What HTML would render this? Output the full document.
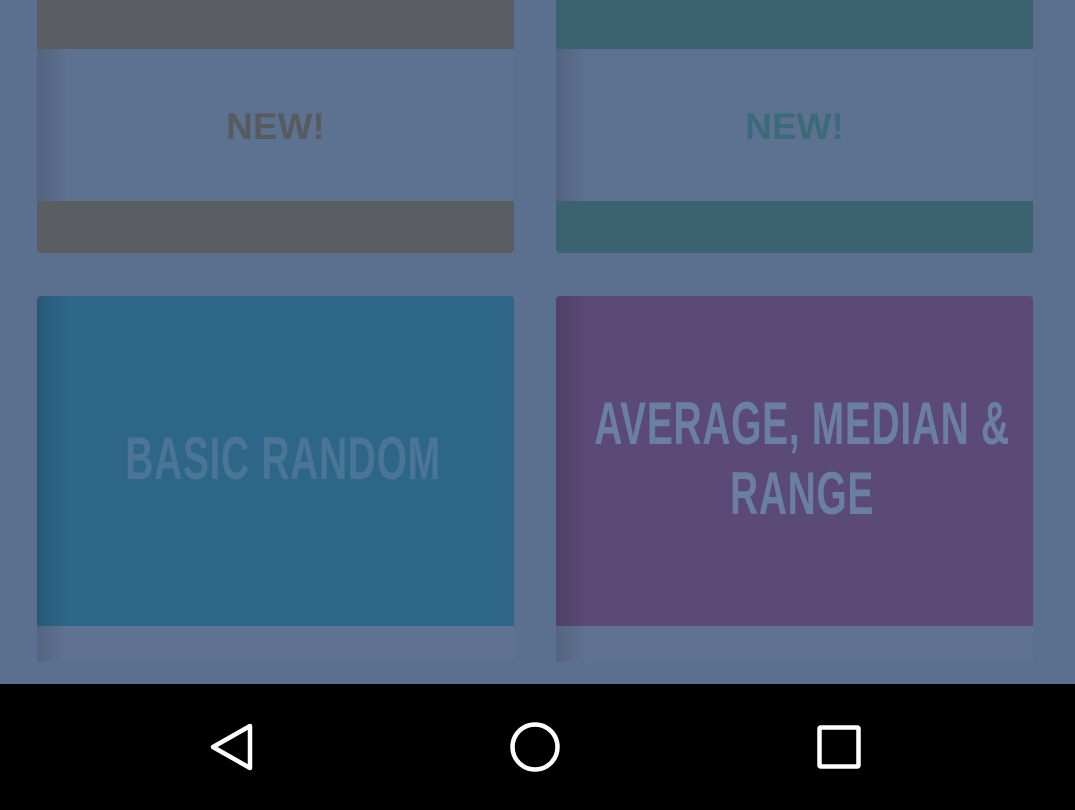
<!DOCTYPE html>
<html><head><style>
body{margin:0;width:1075px;height:810px;background:#5b6f8e;position:relative;overflow:hidden;font-family:"Liberation Sans",sans-serif}
.c{position:absolute;}
.shade{background-image:linear-gradient(90deg,rgba(0,0,0,0.12),rgba(0,0,0,0) 30px)}
.t{position:absolute;text-align:center}
.ob{position:absolute;font-weight:bold;font-size:60px;line-height:60px;white-space:nowrap;transform:translateX(-50%) scale(0.65,1);letter-spacing:1px}
</style></head><body>
<div class="c" style="left:37px;top:0;width:477px;height:49px;background:#5a5e62"></div>
<div class="c shade" style="left:37px;top:49px;width:477px;height:152px;background-color:#5d7190"></div>
<div class="c" style="left:37px;top:201px;width:477px;height:52px;background:#5a5e62;border-radius:0 0 4px 4px"></div>
<div class="t" style="left:37px;width:477px;top:106px;font-size:37px;font-weight:bold;color:#565b60">NEW!</div>
<div class="c" style="left:556px;top:0;width:477px;height:49px;background:#3a6271"></div>
<div class="c shade" style="left:556px;top:49px;width:477px;height:152px;background-color:#5d7190"></div>
<div class="c" style="left:556px;top:201px;width:477px;height:52px;background:#3a6271;border-radius:0 0 4px 4px"></div>
<div class="t" style="left:556px;width:477px;top:106px;font-size:37px;font-weight:bold;color:#3b6b78">NEW!</div>
<div class="c shade" style="left:37px;top:296px;width:477px;height:330px;background-color:#2d6688;border-radius:4px 4px 0 0"></div>
<div class="c shade" style="left:37px;top:626px;width:477px;height:36px;background-color:#5f7292"></div>
<div class="ob" style="left:283px;top:429px;color:#4a7597">BASIC RANDOM</div>
<div class="c shade" style="left:556px;top:296px;width:477px;height:330px;background-color:#5a4a75;border-radius:4px 4px 0 0"></div>
<div class="c shade" style="left:556px;top:626px;width:477px;height:36px;background-color:#5f7292"></div>
<div class="ob" style="left:802px;top:394px;color:#6b7fa0">AVERAGE, MEDIAN &amp;</div>
<div class="ob" style="left:802px;top:464px;color:#6b7fa0">RANGE</div>
<div class="c" style="left:0;top:684px;width:1075px;height:126px;background:#000"></div>
<svg class="c" style="left:0;top:684px" width="1075" height="126">
<path d="M250 42 L250 84 L213 63 Z" fill="none" stroke="#fff" stroke-width="4.5" stroke-linejoin="round"/>
<circle cx="535" cy="63" r="22.5" fill="none" stroke="#fff" stroke-width="4.5"/>
<rect x="819.5" y="43.5" width="39" height="39" fill="none" stroke="#fff" stroke-width="4.5" rx="1"/>
</svg>
</body></html>
